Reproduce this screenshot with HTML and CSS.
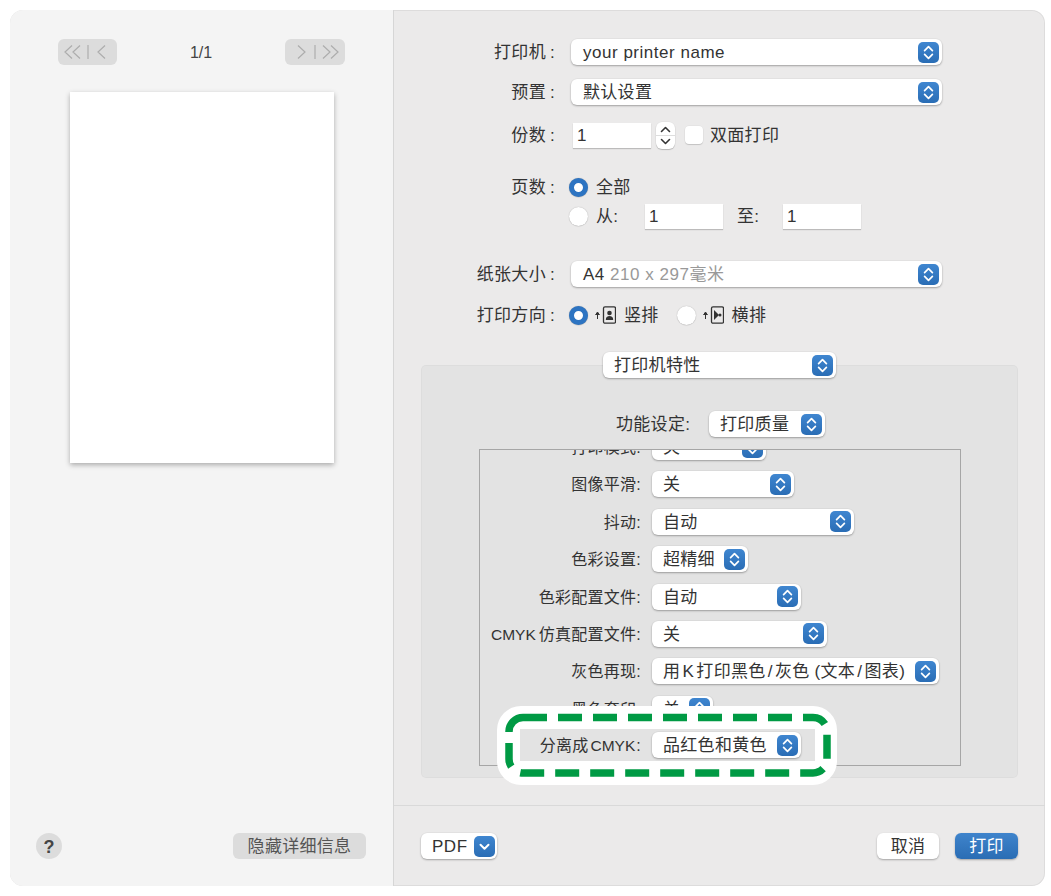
FILE: index.html
```html
<!DOCTYPE html>
<html lang="zh">
<head>
<meta charset="utf-8">
<title>打印</title>
<link rel="stylesheet" href="styles.css">
</head>
<body>
<svg class="defs" width="0" height="0" aria-hidden="true">
  <symbol id="updown" viewBox="0 0 21 21"><path d="M6.6 8.6 10.5 4.7l3.9 3.9M6.6 12.4l3.9 3.9 3.9-3.9" fill="none" stroke="#fff" stroke-width="1.7" stroke-linecap="round" stroke-linejoin="round"/></symbol>
  <symbol id="down" viewBox="0 0 21 21"><path d="M6.5 8.8l4 4 4-4" fill="none" stroke="#fff" stroke-width="2" stroke-linecap="round" stroke-linejoin="round"/></symbol>
</svg>
<main class="window">
  <aside class="preview">
    <div class="nav">
      <div class="nav-btn">
        <svg width="59" height="26" viewBox="0 0 59 26"><path d="M14 6.500 7 13l7 6.500M22 6.500 15 13l7 6.500M30 6v14M47 6.500 40 13l7 6.500" fill="none" stroke="#adadad" stroke-width="1.200"/></svg>
      </div>
      <span class="page-count">1/1</span>
      <div class="nav-btn">
        <svg width="60" height="26" viewBox="0 0 60 26"><path d="M13 6.500 20 13l-7 6.500M30 6v14M38 6.500 45 13l-7 6.500M46 6.500 53 13l-7 6.500" fill="none" stroke="#adadad" stroke-width="1.200"/></svg>
      </div>
    </div>
    <div class="sheet"></div>
    <div class="preview-foot">
      <div class="help">?</div>
      <div class="hide-btn">隐藏详细信息</div>
    </div>
  </aside>

  <section class="settings">
    <div class="form">
      <div class="row">
        <div class="label">打印机<span class="colon">:</span></div>
        <div class="select w-371"><span class="latin">your printer name</span><svg class="step"><use href="#updown"/></svg></div>
      </div>
      <div class="row mt-14">
        <div class="label">预置<span class="colon">:</span></div>
        <div class="select w-371"><span>默认设置</span><svg class="step"><use href="#updown"/></svg></div>
      </div>
      <div class="row mt-17">
        <div class="label">份数<span class="colon">:</span></div>
        <div class="field first-field">1</div>
        <div class="spinner">
          <svg width="19" height="27" viewBox="0 0 19 27"><path d="M5.500 9.500 9.500 5.500l4 4M5.500 17.500l4 4 4-4" fill="none" stroke="#333" stroke-width="1.600" stroke-linecap="round" stroke-linejoin="round"/><path d="M0 13.500h19" stroke="#ddd" stroke-width="1"/></svg>
        </div>
        <div class="checkbox"></div>
        <span class="opt">双面打印</span>
      </div>
      <div class="row mt-26">
        <div class="label">页数<span class="colon">:</span></div>
        <div class="radio on"></div>
        <span class="opt-radio">全部</span>
      </div>
      <div class="row mt-3">
        <div class="label"></div>
        <div class="radio"></div>
        <span class="opt-radio">从:</span>
        <div class="field">1</div>
        <span class="to-label">至:</span>
        <div class="field">1</div>
      </div>
      <div class="row mt-32">
        <div class="label">纸张大小<span class="colon">:</span></div>
        <div class="select w-371"><span class="latin">A4 <span class="muted">210 x 297毫米</span></span><svg class="step"><use href="#updown"/></svg></div>
      </div>
      <div class="row mt-15">
        <div class="label">打印方向<span class="colon">:</span></div>
        <div class="radio on"></div>
        <svg class="orient" width="21" height="18" viewBox="0 0 21 18"><path d="M2.500 13V7M.5 9l2-3 2 3" fill="#333" stroke="#333" stroke-width="1"/><rect x="8.500" y=".8" width="12" height="16.400" rx="1.500" fill="none" stroke="#333" stroke-width="1.300"/><circle cx="14.500" cy="7" r="2.300" fill="#333"/><path d="M10.800 14c0-3 1.500-4 3.700-4s3.700 1 3.700 4z" fill="#333"/></svg>
        <span class="opt-orient">竖排</span>
        <div class="radio second"></div>
        <svg class="orient" width="21" height="18" viewBox="0 0 21 18"><path d="M2.500 13V7M.5 9l2-3 2 3" fill="#333" stroke="#333" stroke-width="1"/><rect x="8.500" y=".8" width="12" height="16.400" rx="1.500" fill="none" stroke="#333" stroke-width="1.300"/><path d="M11 4v10l5-5z" fill="#333"/><circle cx="17" cy="9" r="1.500" fill="#333"/></svg>
        <span class="opt-orient">横排</span>
      </div>
    </div>

    <div class="feature-wrap">
      <div class="select w-233"><span>打印机特性</span><svg class="step"><use href="#updown"/></svg></div>
    </div>

    <div class="panel">
      <div class="func-row">
        <span class="func-label">功能设定:</span>
        <div class="select w-116"><span>打印质量</span><svg class="step"><use href="#updown"/></svg></div>
      </div>
      <div class="scrollbox">
        <div class="list">
          <div class="item"><div class="item-label">打印模式:</div><div class="select w-114"><span>关</span><svg class="step"><use href="#updown"/></svg></div></div>
          <div class="item"><div class="item-label">图像平滑:</div><div class="select w-142"><span>关</span><svg class="step"><use href="#updown"/></svg></div></div>
          <div class="item"><div class="item-label">抖动:</div><div class="select w-202"><span>自动</span><svg class="step"><use href="#updown"/></svg></div></div>
          <div class="item"><div class="item-label">色彩设置:</div><div class="select w-96"><span>超精细</span><svg class="step"><use href="#updown"/></svg></div></div>
          <div class="item"><div class="item-label">色彩配置文件:</div><div class="select w-149"><span>自动</span><svg class="step"><use href="#updown"/></svg></div></div>
          <div class="item"><div class="item-label"><span class="caps lead">CMYK</span>仿真配置文件:</div><div class="select w-175"><span>关</span><svg class="step"><use href="#updown"/></svg></div></div>
          <div class="item"><div class="item-label">灰色再现:</div><div class="select w-287"><span>用<span class="gap">K</span>打印黑色<span class="gap">/</span>灰色 (文本<span class="gap">/</span>图表)</span><svg class="step"><use href="#updown"/></svg></div></div>
          <div class="item"><div class="item-label">黑色套印:</div><div class="select w-61"><span>关</span><svg class="step"><use href="#updown"/></svg></div></div>
        </div>
      </div>
    </div>

    <footer class="foot">
      <div class="select w-76 pdf"><span class="latin">PDF</span><svg class="step"><use href="#down"/></svg></div>
      <div class="foot-actions">
        <div class="btn">取消</div>
        <div class="btn primary">打印</div>
      </div>
    </footer>
  </section>

  <div class="callout">
    <svg class="dashes" width="340" height="79" viewBox="0 0 340 79"><path d="M26 11.500H316a14 14 0 0 1 14 14V53a14 14 0 0 1-14 14H26a14 14 0 0 1-14-14V25.500a14 14 0 0 1 14-14z" fill="none" stroke="#009a44" stroke-width="7.500" stroke-dasharray="24 11"/></svg>
    <div class="callout-row">
      <div class="item-label callout-label">分离成<span class="caps">CMYK</span>:</div>
      <div class="select w-149"><span>品红色和黄色</span><svg class="step"><use href="#updown"/></svg></div>
    </div>
  </div>
</main>
</body>
</html>
```

FILE: styles.css
```css
* { box-sizing: border-box; }
html, body { margin: 0; height: 100%; background: #fff; }
body {
  padding: 10px 6px 10px 10px;
  font-family: "Liberation Sans", "Noto Sans CJK SC", sans-serif;
  font-size: 17px;
  line-height: 26px;
  letter-spacing: .3px;
  color: #333;
  overflow: hidden;
}
.defs { position: absolute; }
.window {
  position: relative;
  display: flex;
  width: 1035px;
  height: 876px;
  border-radius: 13px;
  overflow: hidden;
  background: #ebeaea;
  box-shadow: inset 0 0 0 1px rgba(0,0,0,.06);
}

/* text sits one pixel below the optical centre of its control */
.label, .select, .opt, .opt-radio, .to-label, .opt-orient,
.func-label, .item-label, .btn, .hide-btn, .help, .page-count { padding-top: 2px; }

/* left preview column */
.preview {
  display: flex;
  flex-direction: column;
  align-items: center;
  flex: none;
  width: 384px;
  padding: 29px 27px 27px 26px;
  background: #f4f4f4;
  border-right: 1px solid #d6d6d6;
}
.nav {
  display: flex;
  align-items: center;
  justify-content: space-between;
  flex: none;
  width: 100%;
  height: 26px;
  padding: 0 21px 0 22px;
}
.nav-btn { display: flex; height: 26px; background: #dcdcdc; border-radius: 6px; }
.page-count { font-size: 16px; letter-spacing: 0; color: #444; }
.sheet {
  flex: none;
  width: 264px;
  height: 371px;
  margin: 27px 0 0 2px;
  background: #fff;
  box-shadow: 0 2px 5px rgba(0,0,0,.3);
}
.preview-foot {
  display: flex;
  align-items: center;
  justify-content: space-between;
  width: 100%;
  margin-top: auto;
}
.help {
  display: flex;
  align-items: center;
  justify-content: center;
  width: 26px;
  height: 26px;
  border-radius: 50%;
  background: #dcdcdc;
  font-size: 18px;
  font-weight: 700;
  letter-spacing: 0;
  color: #444;
}
.hide-btn {
  display: flex;
  align-items: center;
  justify-content: center;
  width: 133px;
  height: 26px;
  border-radius: 6px;
  background: #dcdcdc;
  color: #555;
}

/* right settings column */
.settings {
  position: relative;
  display: flex;
  flex-direction: column;
  flex: 1;
  padding-top: 29px;
}
.form { padding-right: 103px; }
.row { display: flex; align-items: center; height: 26px; }
.mt-3 { margin-top: 3px; }
.mt-14 { margin-top: 14px; }
.mt-15 { margin-top: 15px; }
.mt-17 { margin-top: 17px; }
.mt-26 { margin-top: 26px; }
.mt-32 { margin-top: 32px; }
.label { flex: none; width: 161px; margin-right: 16px; text-align: right; white-space: nowrap; }
.colon { margin-left: 4px; }
.latin { letter-spacing: .52px; }
.caps { margin: 0 1px 0 2px; font-size: 15.500px; letter-spacing: 0; }
.caps.lead { margin: 0 3px 0 0; }
.gap { margin: 0 2.200px; }
.muted { color: #999; }

.select {
  position: relative;
  display: flex;
  align-items: center;
  flex: none;
  height: 26px;
  padding-left: 11px;
  background: #fff;
  border-radius: 6px;
  box-shadow: 0 1px 2px rgba(0,0,0,.3), 0 0 0 .5px rgba(0,0,0,.04);
  white-space: nowrap;
}
.row .select { padding-left: 12px; }
.step {
  position: absolute;
  top: 2.500px;
  right: 3px;
  width: 21px;
  height: 21px;
  border-radius: 5px;
  background: linear-gradient(#3f86d0, #2a6db5);
}
.w-61 { width: 61px; }
.w-76 { width: 76px; }
.w-96 { width: 96px; }
.w-114 { width: 114px; }
.w-116 { width: 116px; }
.w-142 { width: 142px; }
.w-149 { width: 149px; }
.w-175 { width: 175px; }
.w-202 { width: 202px; }
.w-233 { width: 233px; }
.w-287 { width: 287px; }
.w-371 { width: 371px; }

.field {
  flex: none;
  width: 78px;
  height: 25px;
  padding-left: 4px;
  background: #fff;
  box-shadow: 0 1px 1px rgba(0,0,0,.2);
  line-height: 25px;
  letter-spacing: 0;
}
.first-field { margin-left: 2px; }
.spinner {
  flex: none;
  width: 19px;
  height: 27px;
  margin-left: 5px;
  background: #fff;
  border-radius: 6px;
  box-shadow: 0 1px 1px rgba(0,0,0,.2), 0 0 0 .5px rgba(0,0,0,.05);
}
.spinner svg { display: block; }
.checkbox {
  flex: none;
  width: 18px;
  height: 18px;
  margin-left: 10px;
  background: #fff;
  border-radius: 4px;
  box-shadow: 0 1px 1px rgba(0,0,0,.15), 0 0 0 .5px rgba(0,0,0,.05);
}
.opt { margin-left: 7px; }
.radio {
  flex: none;
  width: 19px;
  height: 19px;
  margin-left: -2px;
  background: #fff;
  border-radius: 50%;
  box-shadow: 0 0 1px rgba(0,0,0,.3), 0 .5px 1px rgba(0,0,0,.1);
}
.radio.on { border: 5.500px solid #2d74c2; }
.radio.second { margin-left: 18px; }
.opt-radio { flex: none; width: 49px; margin-left: 8px; }
.to-label { flex: none; width: 46px; margin-left: 14px; }
.orient { flex: none; margin-left: 7px; }
.opt-orient { flex: none; margin-left: 8px; }

.feature-wrap {
  position: relative;
  z-index: 1;
  display: flex;
  justify-content: center;
  margin-top: 24px;
}
.panel {
  display: flex;
  flex-direction: column;
  width: 597px;
  height: 413px;
  margin: -13px 0 0 27px;
  padding: 46px 0 0 58px;
  background: #e3e3e3;
  border-radius: 5px;
  box-shadow: inset 0 0 0 1px rgba(0,0,0,.025);
}
.func-row { display: flex; align-items: center; height: 26px; padding-left: 137px; }
.func-label { flex: none; width: 93px; }
.scrollbox {
  flex: none;
  width: 482px;
  height: 317px;
  margin-top: 12px;
  border: 1.500px solid #a6a6a6;
  overflow: hidden;
}
.list { display: flex; flex-direction: column; gap: 11.400px; margin-top: -16px; }
.item { display: flex; align-items: center; flex: none; height: 26px; }
.item-label {
  flex: none;
  width: 161px;
  margin-right: 11px;
  font-size: 16px;
  letter-spacing: .25px;
  text-align: right;
  white-space: nowrap;
}

.foot {
  display: flex;
  align-items: center;
  justify-content: space-between;
  height: 81px;
  margin-top: 27px;
  padding: 0 27px;
  border-top: 1px solid #d9d9d9;
}
.pdf .step { right: 2px; }
.foot-actions { display: flex; gap: 16px; }
.btn {
  display: flex;
  align-items: center;
  justify-content: center;
  width: 62px;
  height: 26px;
  background: #fff;
  border-radius: 6px;
  box-shadow: 0 1px 2px rgba(0,0,0,.3);
}
.btn.primary { width: 63px; background: linear-gradient(#3f84cc, #2a6db4); color: #fff; }

/* annotation laid over the screenshot */
.callout {
  position: absolute;
  top: 696px;
  left: 487px;
  width: 340px;
  height: 79px;
  background: #fff;
  border-radius: 24px;
}
.dashes { position: absolute; top: 0; left: 0; }
.callout-row {
  position: absolute;
  top: 23px;
  left: 23px;
  display: flex;
  align-items: center;
  width: 295px;
  height: 32px;
  background: #e3e3e3;
}
.callout-label { width: 121px; }
```
